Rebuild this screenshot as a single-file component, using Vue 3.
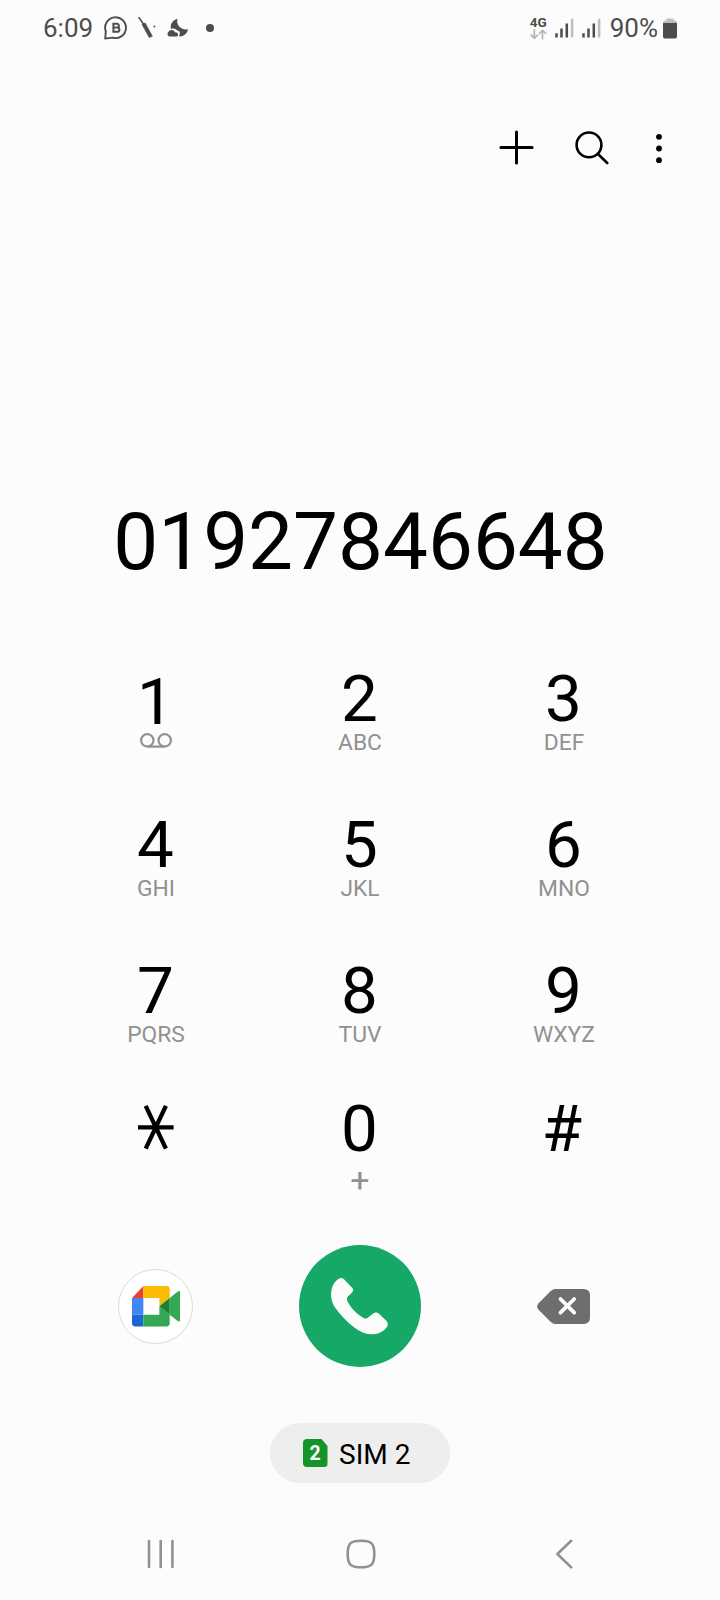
<template>
  <div class="phone">
    <!-- status bar -->
    <header class="status">
      <span class="status-text">6:09</span>
      <svg class="ic-chat" width="24" height="24" viewBox="0 0 24 24">
        <path d="M1.2 22.6 L1.8 15.3 A10.4 10.4 0 1 1 8.4 21.6 Z" fill="none" stroke="#4d4d4d" stroke-width="1.9" stroke-linejoin="round" />
        <path d="M9.4 6.8 V16.8 M9.4 7.8 H13 A1.9 1.9 0 0 1 13 11.6 H9.4 M13 11.6 H13.3 A2.1 2.1 0 0 1 13.3 15.8 H9.4" fill="none" stroke="#4d4d4d" stroke-width="2" />
      </svg>
      <svg class="ic-pen" width="20" height="24" viewBox="0 0 20 24">
        <path d="M2 1.6 L6.4 8" stroke="#4d4d4d" stroke-width="1.6" stroke-linecap="round" />
        <path d="M5 8.4 L8.2 7 L15.4 20.2 L12.2 21.6 Z" fill="#4d4d4d" stroke="#4d4d4d" stroke-width=".6" stroke-linejoin="round" />
        <circle cx="17.4" cy="10.4" r="1" fill="#4d4d4d" />
      </svg>
      <svg class="ic-moon" width="22" height="20" viewBox="0 0 22 20">
        <path d="M10.4 .8 C5.4 2.4 3 6.2 4 11 C6.4 10 8.8 10.6 10.2 12.6 C13 12.6 13.6 15.6 12 18.4 C16.6 18.6 20 15.8 21.2 11.2 C14.4 12.6 8.8 7.6 10.4 .8 Z" fill="#4d4d4d" />
        <path d="M2.9 18.6 A2.7 2.7 0 0 1 1.8 13.6 C3.2 11.4 7 11.6 8 14.4 C11 13.8 12.2 17.2 10 18.6 Z" fill="#4d4d4d" />
      </svg>
      <span class="ic-dot"></span>

      <div class="net">
        <span class="net-label">4G</span>
        <svg width="17" height="11" viewBox="0 0 17 11" fill="none" stroke="#b5b5b5" stroke-width="1.7">
          <path d="M4.3 0 V9 M.7 5.6 L4.3 9.2 L7.9 5.6" />
          <path d="M12.5 10.5 V1.5 M8.9 5 L12.5 1.4 L16.1 5" />
        </svg>
      </div>
      <svg v-for="n in 2" :key="n" class="ic-signal" width="19" height="20" viewBox="0 0 19 20" stroke-width="2.5">
        <path d="M1.5 15.3 V19.4 M6.5 10.4 V19.4 M11.8 5.4 V19.4" stroke="#4d4d4d" />
        <path d="M17.1 .8 V19.4" stroke="#bdbdbd" />
      </svg>
      <span class="status-text battery-text">90%</span>
      <svg class="ic-battery" width="14" height="21" viewBox="0 0 14 21">
        <path d="M3.5 2.5 V.5 H10.5 V2.5 H12 Q14 2.5 14 5 H0 Q0 2.5 2 2.5 Z" fill="#bdbdbd" />
        <path d="M0 5 H14 V18.5 Q14 20.5 12 20.5 H2 Q0 20.5 0 18.5 Z" fill="#4d4d4d" />
      </svg>
    </header>

    <!-- toolbar -->
    <nav class="toolbar">
      <button class="tool">
        <svg width="36" height="36" viewBox="0 0 36 36" fill="none" stroke="#000" stroke-width="3" stroke-linecap="round">
          <path d="M18.5 1.9 V33.1 M2.9 17.5 H34.1" />
        </svg>
      </button>
      <button class="tool tool-search">
        <svg width="36" height="36" viewBox="0 0 36 36" fill="none" stroke="#000" stroke-width="2.6" stroke-linecap="round">
          <circle cx="16" cy="14.9" r="12.4" />
          <path d="M25.2 24.2 L34.2 33" />
        </svg>
      </button>
      <button class="tool tool-more">
        <svg width="8" height="36" viewBox="0 0 8 36">
          <circle v-for="y in [6.8, 18.5, 30.2]" :key="y" cx="4" :cy="y" r="2.9" />
        </svg>
      </button>
    </nav>

    <div class="number">{{ number }}</div>

    <!-- keypad -->
    <main class="keypad">
      <button v-for="key in keys" :key="key.digit" class="key" :class="{ 'key-one': key.digit === '1', 'key-hash': key.digit === '#' }" @click="press(key.digit)">
        <svg v-if="key.digit === '*'" class="star" width="40" height="64" viewBox="0 0 40 64" stroke="#000" stroke-width="4.3">
          <path d="M2 30.3 H37.6 M9.7 8.9 L29.9 51.7 M29.9 8.9 L9.7 51.7" />
        </svg>
        <span v-else class="digit">{{ key.digit }}</span>
        <svg v-if="key.digit === '1'" class="voicemail" width="34" height="15" viewBox="0 0 34 15" fill="none" stroke="#919191" stroke-width="2.2">
          <circle cx="8.3" cy="7.3" r="6.2" />
          <circle cx="25.7" cy="7.3" r="6.2" />
          <path d="M8.3 13.6 H25.7" />
        </svg>
        <span v-else class="letters" :class="{ plus: key.letters === '+' }">{{ key.letters }}</span>
      </button>
    </main>

    <!-- call actions -->
    <section class="actions">
      <button class="action action-side">
        <span class="meet">
          <svg width="48.4" height="40.4" viewBox="0 0 145 121">
            <path d="M34 0 V36 H0 Z" fill="#ea4335" />
            <path d="M34 0 H103 Q113 0 113 10 V36 L82 61 V36 H34 Z" fill="#fbbc04" />
            <path d="M0 36 H34 V86 H0 Z" fill="#4285f4" />
            <path d="M0 86 H34 V121 H10 Q0 121 0 111 Z" fill="#1967d2" />
            <path d="M34 86 H82 V61 L113 86 V111 Q113 121 103 121 H34 Z" fill="#34a853" />
            <path d="M113 36 L136 17 Q145 11 145 21 V100 Q145 110 136 104 L113 86 Z" fill="#34a853" />
            <path d="M82 61 L113 36 V86 Z" fill="#188038" />
          </svg>
        </span>
      </button>
      <button class="action">
        <span class="call">
          <svg width="57" height="57" viewBox="0 0 171 171">
            <path d="M22 3 Q31 -3 39 4 L64 30 Q69 36 64 43 L50 56 Q46 60 49 69 C60 91 78 109 98 120 Q106 124 112 118 L126 107 Q135 100 144 107 L166 128 Q174 137 168 147 C160 158 146 167 128 169 C108 170 90 164 72 150 C50 134 28 112 11 87 C-1 70 -2 48 3 29 Q8 13 22 3 Z" fill="#fcfcfc" />
          </svg>
        </span>
      </button>
      <button class="action action-side" @click="erase">
        <svg width="53" height="35" viewBox="0 0 53 35">
          <path d="M18.5 0 H46.5 Q53 0 53 6.5 V28.5 Q53 35 46.5 35 H18.5 Q16 35 13.5 32.8 L1.6 20.8 Q-1.4 17.5 1.6 14.2 L13.5 2.2 Q16 0 18.5 0 Z" fill="#6e6e6e" />
          <path d="M23.5 10 L37.2 23.7 M37.2 10 L23.5 23.7" stroke="#fcfcfc" stroke-width="3.8" stroke-linecap="round" />
        </svg>
      </button>
    </section>

    <button class="sim">
      <span class="sim-card">2</span>
      <span class="sim-name">SIM 2</span>
    </button>

    <!-- system navigation -->
    <footer class="sysnav">
      <svg width="28" height="30" viewBox="0 0 28 30">
        <path d="M2 2 V28 M13.7 2 V28 M25.4 2 V28" />
      </svg>
      <svg class="home" width="30" height="30" viewBox="0 0 30 30">
        <path d="M15 1.7 C25.5 1.7 28.3 4.5 28.3 15 S25.5 28.3 15 28.3 S1.7 25.5 1.7 15 S4.5 1.7 15 1.7 Z" />
      </svg>
      <svg width="18" height="30" viewBox="0 0 18 30">
        <path d="M16.2 1.8 L2.4 15 L16.2 28.4" />
      </svg>
    </footer>
  </div>
</template>

<script setup>
import { ref } from 'vue'

const number = ref('01927846648')

const keys = [
  { digit: '1', letters: '' },
  { digit: '2', letters: 'ABC' },
  { digit: '3', letters: 'DEF' },
  { digit: '4', letters: 'GHI' },
  { digit: '5', letters: 'JKL' },
  { digit: '6', letters: 'MNO' },
  { digit: '7', letters: 'PQRS' },
  { digit: '8', letters: 'TUV' },
  { digit: '9', letters: 'WXYZ' },
  { digit: '*', letters: '' },
  { digit: '0', letters: '+' },
  { digit: '#', letters: '' },
]

function press(digit) {
  number.value += digit
}

function erase() {
  number.value = number.value.slice(0, -1)
}
</script>

<style>
body {
  margin: 0;
  background: #fcfcfc;
}
</style>

<style scoped>
.phone {
  display: flex;
  flex-direction: column;
  width: 720px;
  height: 1600px;
  overflow: hidden;
  background: #fcfcfc;
  color: #000;
  font-family: Roboto, 'Noto Sans', sans-serif;
}

button {
  padding: 0;
  border: none;
  background: none;
  color: inherit;
  font: inherit;
  cursor: pointer;
}

svg {
  display: block;
  flex-shrink: 0;
}

/* status bar */
.status {
  display: flex;
  align-items: center;
  box-sizing: border-box;
  height: 56px;
  padding: 0 43px;
}

.status-text {
  font-size: 26px;
  line-height: 56px;
  color: #4d4d4d;
}

.ic-chat { margin-left: 11px; }
.ic-pen { margin-left: 9px; }
.ic-moon { margin-left: 10px; }

.ic-dot {
  width: 8px;
  height: 8px;
  margin-left: 17px;
  border-radius: 50%;
  background: #4d4d4d;
}

.net {
  display: flex;
  flex-direction: column;
  align-items: center;
  gap: 1px;
  margin-left: auto;
}

.net-label {
  font-size: 13.5px;
  font-weight: 700;
  line-height: 12px;
  color: #4d4d4d;
}

.ic-signal { margin-left: 8px; }
.battery-text { margin-left: 9px; }
.ic-battery { margin-left: 5px; }

/* toolbar */
.toolbar {
  display: flex;
  align-items: center;
  justify-content: flex-end;
  height: 184px;
  padding-right: 57px;
}

.tool-search { margin-left: 39px; }
.tool-more { margin-left: 46px; }

/* dialed number */
.number {
  height: 124px;
  margin: 240px 0 63px;
  padding-left: 1px;
  font-size: 80px;
  line-height: 124px;
  text-align: center;
}

/* keypad */
.keypad {
  display: grid;
  grid-template-columns: repeat(3, 204px);
  grid-template-rows: 146px 146px 138px 107px;
  justify-content: center;
  padding-right: 1px;
}

.key {
  display: flex;
  flex-direction: column;
  align-items: center;
}

.key-one { padding-top: 3px; }
.key-hash { padding-right: 3px; }

.digit {
  font-size: 65.5px;
  line-height: 63px;
}

.letters {
  padding-left: 1px;
  font-size: 22.8px;
  line-height: 26px;
  color: #919191;
}

.plus {
  font-size: 34px;
  line-height: 41px;
}

/* call actions */
.actions {
  display: grid;
  grid-template-columns: repeat(3, 204px);
  justify-content: center;
  height: 122px;
  margin-top: 41px;
}

.action {
  display: flex;
  align-items: center;
  justify-content: center;
}

.action-side { padding: 1px 1.5px 0 0; }

.meet {
  display: flex;
  align-items: center;
  justify-content: center;
  box-sizing: border-box;
  width: 75px;
  height: 75px;
  padding-left: 1px;
  border: 1px solid #dadada;
  border-radius: 50%;
  background: #fff;
}

.call {
  display: flex;
  align-items: center;
  justify-content: center;
  box-sizing: border-box;
  width: 122px;
  height: 122px;
  padding: 1px 2px 0 0;
  border-radius: 50%;
  background: #15a866;
}

/* sim switcher */
.sim {
  display: flex;
  align-items: center;
  align-self: center;
  box-sizing: border-box;
  width: 180px;
  height: 60px;
  margin-top: 56px;
  padding-left: 32.5px;
  border-radius: 30px;
  background: #eeeeee;
}

.sim-card {
  width: 25px;
  height: 28px;
  border-radius: 4px;
  background: #14952a;
  clip-path: polygon(0 0, 19px 0, 100% 7px, 100% 100%, 0 100%);
  color: #fff;
  font-size: 19.5px;
  font-weight: 700;
  line-height: 29px;
}

.sim-name {
  margin-left: 11.5px;
  padding-top: 3px;
  font-size: 28px;
}

/* system navigation */
.sysnav {
  display: flex;
  justify-content: space-between;
  margin-top: 56px;
  padding: 0 147px;
  fill: none;
  stroke: #919191;
  stroke-width: 2.6;
  stroke-linecap: round;
  stroke-linejoin: round;
}

.home { margin-right: 8px; }
</style>
